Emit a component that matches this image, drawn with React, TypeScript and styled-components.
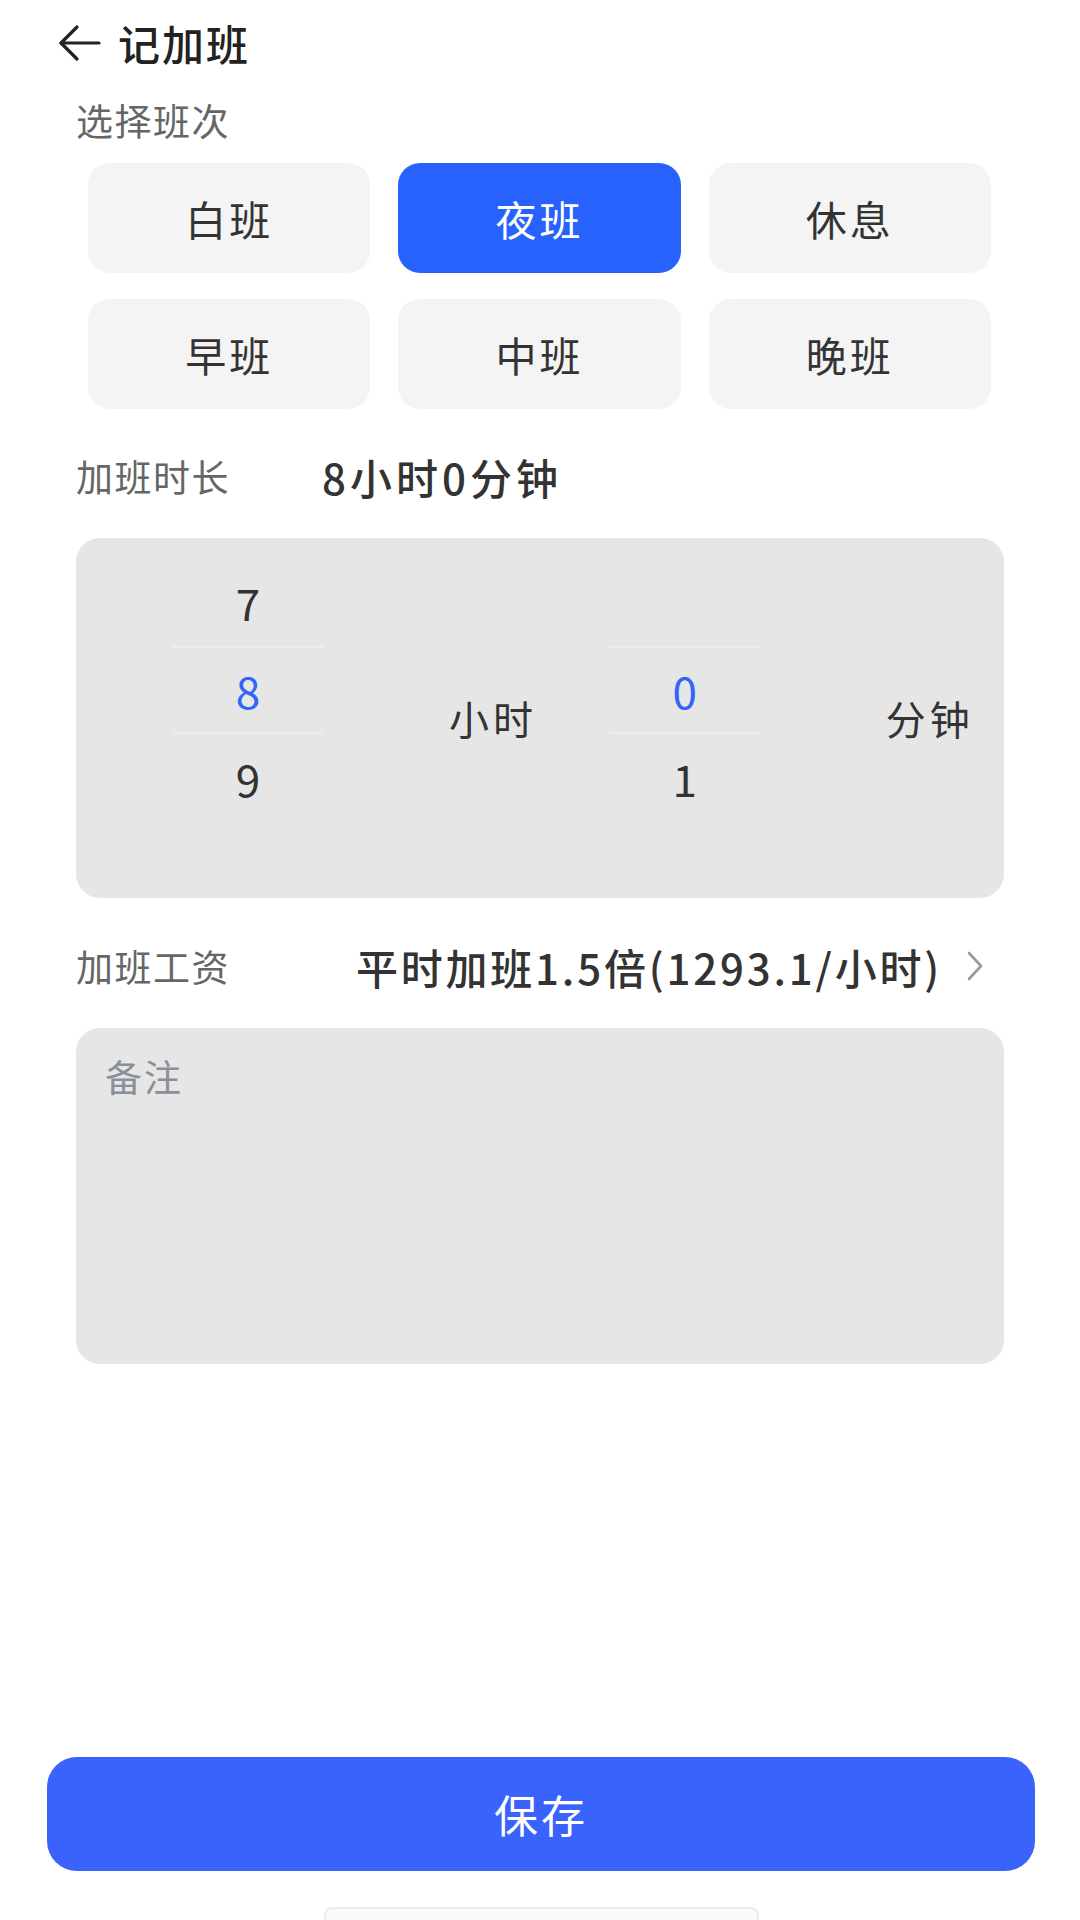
import styled, { createGlobalStyle } from 'styled-components'

const GlobalStyle = createGlobalStyle`
  html, body {
    margin: 0;
    padding: 0;
    background: #ffffff;
  }
  body {
    font-family: "Noto Sans CJK SC", "Noto Sans", sans-serif;
    color: #333333;
  }
  * {
    box-sizing: border-box;
  }
`

const Page = styled.div`
  width: 1080px;
  height: 1920px;
  display: flex;
  flex-direction: column;
  background: #ffffff;
  overflow: hidden;
`

const Header = styled.div`
  height: 86px;
  display: flex;
  align-items: center;
  padding-left: 58px;
`

const BackBtn = styled.button`
  width: 44px;
  height: 44px;
  padding: 0;
  border: none;
  background: transparent;
  display: flex;
  align-items: center;
  justify-content: center;
  color: #222222;
`

const Title = styled.h1`
  margin: 0 0 0 16px;
  font-size: 42px;
  line-height: 48px;
  font-weight: 500;
  color: #222222;
  letter-spacing: 2px;
`

const Content = styled.div`
  padding: 0 76px;
  display: flex;
  flex-direction: column;
`

const SectionLabel = styled.div`
  margin-top: 10px;
  font-size: 37px;
  line-height: 48px;
  color: #666666;
  letter-spacing: 1.5px;
`

const ShiftGrid = styled.div`
  margin: 19px 13px 0 12px;
  display: grid;
  grid-template-columns: repeat(3, 1fr);
  column-gap: 28px;
  row-gap: 26px;
`

const ShiftBtn = styled.button<{ $active?: boolean }>`
  height: 110px;
  border: none;
  border-radius: 22px;
  font-family: inherit;
  font-size: 41px;
  letter-spacing: 3px;
  background: ${p => (p.$active ? '#2862fd' : '#f4f4f4')};
  color: ${p => (p.$active ? '#ffffff' : '#333333')};
`

const InfoRow = styled.div<{ $top: number }>`
  margin-top: ${p => p.$top}px;
  height: 60px;
  display: flex;
  align-items: center;
`

const InfoLabel = styled.div`
  width: 246px;
  flex-shrink: 0;
  font-size: 37px;
  color: #666666;
  letter-spacing: 1.5px;
`

const InfoValue = styled.div`
  font-size: 42px;
  font-weight: 500;
  color: #333333;
  letter-spacing: 4px;
`

const WageValue = styled(InfoValue)`
  flex: 1;
  text-align: right;
  letter-spacing: 2.8px;
`

const Chevron = styled.span`
  margin: 0 20px 0 24px;
  display: flex;
  align-items: center;
  color: #9a9a9a;
`

const PickerBox = styled.div`
  margin-top: 32px;
  height: 360px;
  border-radius: 24px;
  background: #e6e6e6;
  display: flex;
  padding-left: 97px;
`

const PickerGroup = styled.div<{ $width?: number }>`
  width: ${p => p.$width ?? 400}px;
  display: flex;
`

const PickerColumn = styled.div`
  width: 150px;
  margin-top: 20px;
  align-self: flex-start;
  display: flex;
  flex-direction: column;
`

const PickerItem = styled.div<{ $selected?: boolean }>`
  height: 88px;
  display: flex;
  align-items: center;
  justify-content: center;
  font-size: 44px;
  color: ${p => (p.$selected ? '#2f66f6' : '#333333')};
  border-top: ${p => (p.$selected ? '2px solid #eeeeee' : 'none')};
  border-bottom: ${p => (p.$selected ? '2px solid #eeeeee' : 'none')};
`

const PickerUnit = styled.div`
  align-self: center;
  margin-left: 126px;
  font-size: 40px;
  color: #333333;
  letter-spacing: 4px;
`

const Remark = styled.textarea`
  margin-top: 32px;
  height: 336px;
  border: none;
  border-radius: 24px;
  background: #e6e6e6;
  padding: 24px 29px;
  resize: none;
  font-family: inherit;
  font-size: 37px;
  line-height: 48px;
  color: #333333;
  outline: none;
  &::placeholder {
    color: #8a9099;
    letter-spacing: 2px;
  }
`

const Footer = styled.div`
  margin-top: auto;
  padding: 0 45px 0 47px;
  display: flex;
  flex-direction: column;
  align-items: center;
`

const SaveBtn = styled.button`
  width: 100%;
  height: 114px;
  border: none;
  border-radius: 30px;
  background: #3a62fd;
  color: #ffffff;
  font-family: inherit;
  font-size: 44px;
  letter-spacing: 3px;
`

const HomeBar = styled.div`
  margin-top: 36px;
  width: 435px;
  height: 13px;
  border: 2px solid #ececec;
  border-bottom: none;
  border-radius: 8px 8px 0 0;
  background: #fafafa;
`

const shifts = ['白班', '夜班', '休息', '早班', '中班', '晚班']

const App = () => {
  return (
    <Page>
      <GlobalStyle />
      <Header>
        <BackBtn>
          <svg width="44" height="44" viewBox="0 0 44 44" fill="none" stroke="currentColor" strokeWidth="3.2" strokeLinecap="round" strokeLinejoin="round">
            <path d="M41 22H3" />
            <path d="M19 6L3 22l16 16" />
          </svg>
        </BackBtn>
        <Title>记加班</Title>
      </Header>
      <Content>
        <SectionLabel>选择班次</SectionLabel>
        <ShiftGrid>
          {shifts.map(s => (
            <ShiftBtn key={s} $active={s === '夜班'}>{s}</ShiftBtn>
          ))}
        </ShiftGrid>

        <InfoRow $top={37}>
          <InfoLabel>加班时长</InfoLabel>
          <InfoValue>8小时0分钟</InfoValue>
        </InfoRow>

        <PickerBox>
          <PickerGroup $width={443}>
            <PickerColumn>
              <PickerItem>7</PickerItem>
              <PickerItem $selected>8</PickerItem>
              <PickerItem>9</PickerItem>
            </PickerColumn>
            <PickerUnit>小时</PickerUnit>
          </PickerGroup>
          <PickerGroup>
            <PickerColumn>
              <PickerItem />
              <PickerItem $selected>0</PickerItem>
              <PickerItem>1</PickerItem>
            </PickerColumn>
            <PickerUnit>分钟</PickerUnit>
          </PickerGroup>
        </PickerBox>

        <InfoRow $top={38}>
          <InfoLabel>加班工资</InfoLabel>
          <WageValue>平时加班1.5倍(1293.1/小时)</WageValue>
          <Chevron>
            <svg width="18" height="32" viewBox="0 0 18 32" fill="none" stroke="currentColor" strokeWidth="2.6" strokeLinecap="round" strokeLinejoin="round">
              <path d="M3 3l12 13L3 29" />
            </svg>
          </Chevron>
        </InfoRow>

        <Remark placeholder="备注" />
      </Content>

      <Footer>
        <SaveBtn>保存</SaveBtn>
        <HomeBar />
      </Footer>
    </Page>
  )
}

export default App
